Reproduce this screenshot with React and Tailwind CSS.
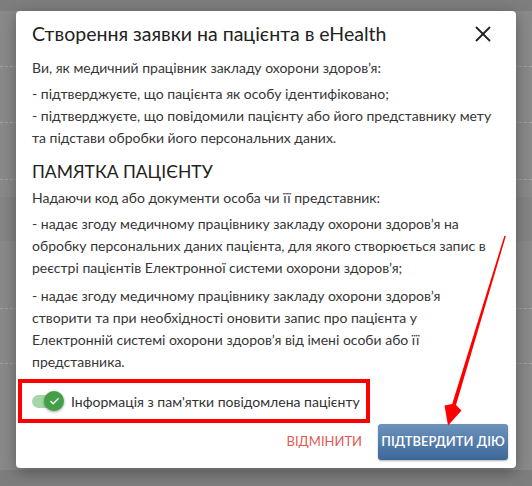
import { Check, X } from "lucide-react";

const font = { fontFamily: "Lato, 'Noto Sans', sans-serif" };

const Toggle = () => (
  <div className="relative w-[30px] h-[20px] flex items-center shrink-0">
    <div className="w-[28px] h-[13px] rounded-full bg-[#a5d6a7]" />
    <div className="absolute left-[12px] top-0 w-[20px] h-[20px] rounded-full bg-[#43a047] shadow-[0_1px_3px_rgba(0,0,0,0.4)] flex items-center justify-center">
      <Check className="w-[11px] h-[11px] text-white" strokeWidth={3} />
    </div>
  </div>
);

const App = () => {
  return (
    <div className="relative w-[532px] h-[486px] overflow-hidden bg-[#8a8a8a]" style={font}>
      {/* page behind the overlay */}
      <div className="absolute inset-0 flex flex-col">
        <div className="h-[11px] bg-[#7e7e7e]" />
        <div className="h-[56px] border-b border-dashed border-[#a3a3a3]" />
        <div className="h-[56px] border-b border-dashed border-[#a3a3a3]" />
        <div className="h-[57px] border-b border-dashed border-[#a3a3a3]" />
        <div className="h-[17px]" />
        <div className="h-[44px] bg-[#858585]" />
        <div className="h-[68px] border-b border-dashed border-[#a3a3a3]" />
        <div className="h-[55px] border-b border-dashed border-[#a3a3a3]" />
        <div className="flex-1" />
        <div className="h-[16px] bg-[#7e7e7e]" />
      </div>

      {/* dialog */}
      <div className="absolute left-[16px] top-[11px] w-[500px] h-[457px] bg-white rounded-[4px] shadow-[0_4px_16px_rgba(0,0,0,0.35)] flex flex-col">
        <div className="flex items-center justify-between pl-4 pr-[20px] pt-[10px]">
          <h2 className="text-[19.5px] leading-[26px] text-[#222]">Створення заявки на пацієнта в eHealth</h2>
          <X className="w-[26px] h-[26px] text-[#222]" strokeWidth={1.7} />
        </div>

        <div className="px-4 pt-[10px] text-[14px] leading-[22px] text-[#363636] whitespace-nowrap">
          <p>Ви, як медичний працівник закладу охорони здоров’я:</p>
          <p className="mt-[4px]">- підтверджуєте, що пацієнта як особу ідентифіковано;</p>
          <p>
            - підтверджуєте, що повідомили пацієнту або його представнику мету
            <br />
            та підстави обробки його персональних даних.
          </p>

          <h3 className="mt-[10px] text-[17.5px] leading-[26px] text-[#222]">ПАМЯТКА ПАЦІЄНТУ</h3>
          <p className="mt-[2px]">Надаючи код або документи особа чи її представник:</p>
          <p className="mt-[4px]">
            - надає згоду медичному працівнику закладу охорони здоров’я на
            <br />
            обробку персональних даних пацієнта, для якого створюється запис в
            <br />
            реєстрі пацієнтів Електронної системи охорони здоров’я;
          </p>
          <p className="mt-[6px]">
            - надає згоду медичному працівнику закладу охорони здоров’я
            <br />
            створити та при необхідності оновити запис про пацієнта у
            <br />
            Електронній системі охорони здоров’я від імені особи або її
            <br />
            представника.
          </p>
        </div>

        <div className="ml-[2px] mt-[6px] w-[352px] h-[44px] border-4 border-[#ff0000] flex items-center gap-[9px] pl-[10px]">
          <Toggle />
          <span className="text-[14px] text-[#333] whitespace-nowrap">Інформація з пам'ятки повідомлена пацієнту</span>
        </div>

        <div className="flex items-center justify-end gap-[16px] pr-2 mt-[1px]">
          <button className="text-[13px] text-[#e05a50] uppercase whitespace-nowrap">Відмінити</button>
          <button className="w-[130px] h-[36px] rounded-[3px] bg-gradient-to-b from-[#6d93bd] to-[#3c6898] text-white text-[13px] font-semibold uppercase whitespace-nowrap shadow-[0_1px_2px_rgba(0,0,0,0.3)]">
            Підтвердити дію
          </button>
        </div>
      </div>

      {/* red arrow annotation */}
      <svg className="absolute inset-0 pointer-events-none" width="532" height="486" viewBox="0 0 532 486">
        <polygon
          points="504.4,235.8 505.8,236.2 456,405 461.5,410.5 448,425.5 444.5,405.5 452.2,404"
          fill="#ff0000"
        />
      </svg>
    </div>
  );
};

export default App;
